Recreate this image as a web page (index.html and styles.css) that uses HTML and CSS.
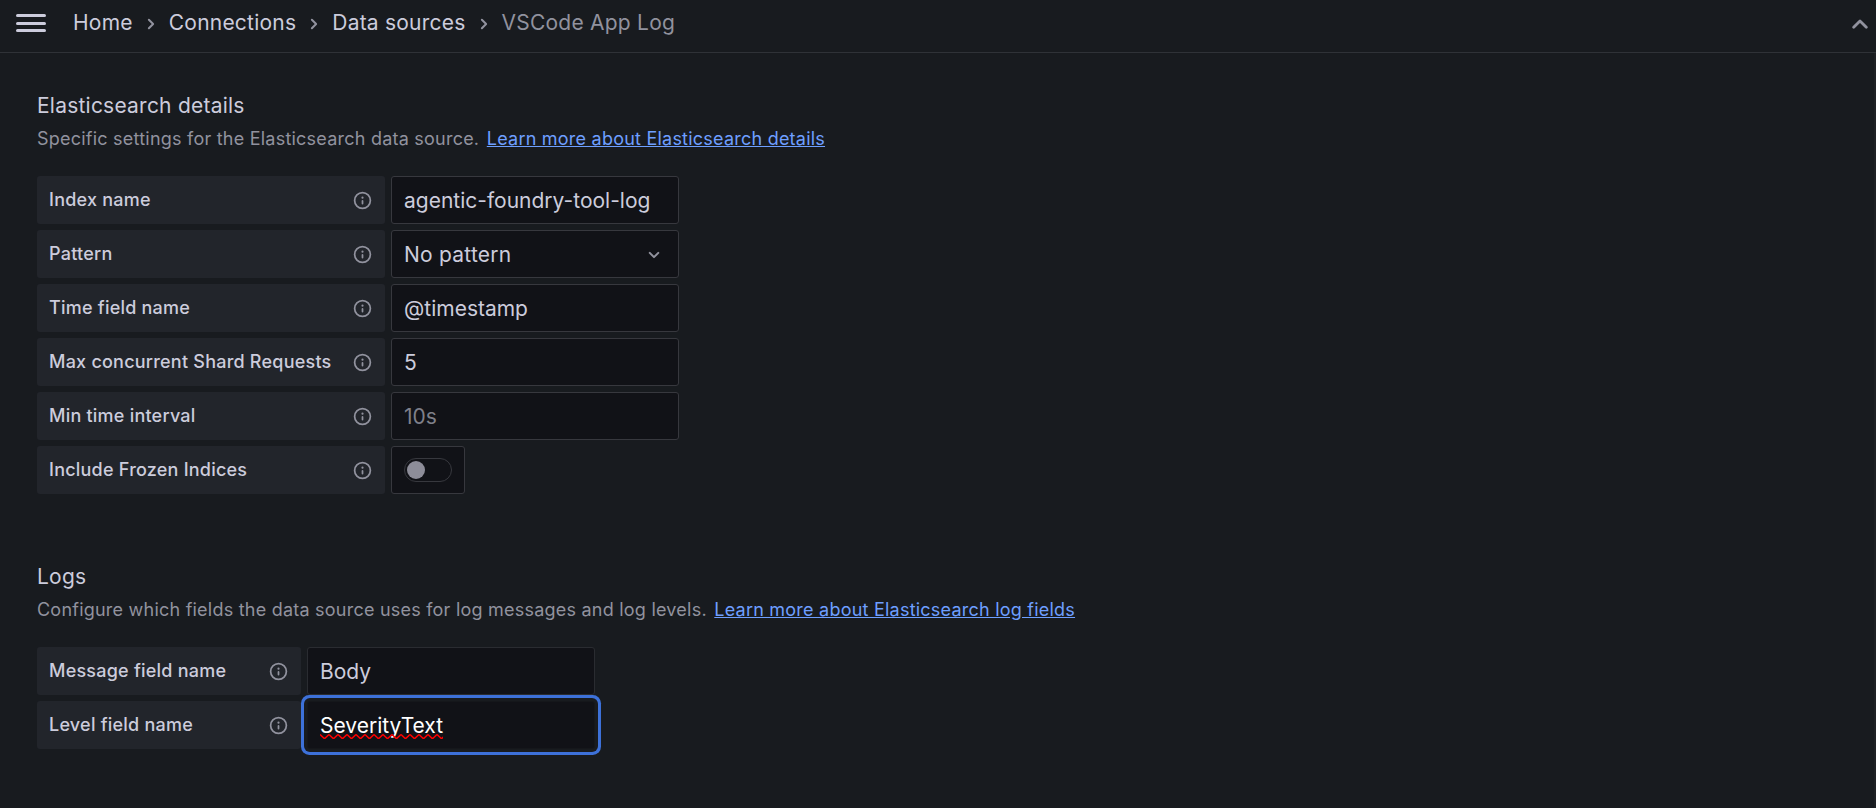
FILE: index.html
```html
<!DOCTYPE html>
<html lang="en">
<head>
<meta charset="utf-8">
<title>VSCode App Log - Data sources</title>
<link rel="stylesheet" href="styles.css">
</head>
<body>
<svg class="defs" aria-hidden="true">
  <symbol id="info" viewBox="0 0 24 24"><path d="M12,2A10,10,0,1,0,22,12,10.01114,10.01114,0,0,0,12,2Zm0,18a8,8,0,1,1,8-8A8.00917,8.00917,0,0,1,12,20Zm0-8.5a1,1,0,0,0-1,1v3a1,1,0,0,0,2,0v-3A1,1,0,0,0,12,11.5Zm0-4a1.25,1.25,0,1,0,1.25,1.25A1.25,1.25,0,0,0,12,7.5Z"/></symbol>
  <symbol id="right" viewBox="0 0 24 24"><path d="M14.83,11.29,10.59,7.05a1,1,0,0,0-1.42,0,1,1,0,0,0,0,1.41L12.71,12,9.17,15.54a1,1,0,0,0,0,1.41,1,1,0,0,0,.71.29,1,1,0,0,0,.71-.29l4.24-4.24A1,1,0,0,0,14.83,11.29Z"/></symbol>
  <symbol id="down" viewBox="0 0 24 24"><path d="M17,9.17a1,1,0,0,0-1.41,0L12,12.71,8.46,9.17a1,1,0,0,0-1.41,0,1,1,0,0,0,0,1.42l4.24,4.24a1,1,0,0,0,1.42,0L17,10.59A1,1,0,0,0,17,9.17Z"/></symbol>
</svg>
<header class="topbar">
  <button class="menu" aria-label="Menu"><span></span><span></span><span></span></button>
  <nav class="crumbs">
    <a>Home</a><svg class="sep"><use href="#right"/></svg>
    <a>Connections</a><svg class="sep"><use href="#right"/></svg>
    <a>Data sources</a><svg class="sep"><use href="#right"/></svg>
    <span class="current">VSCode App Log</span>
  </nav>
  <svg class="collapse" viewBox="0 0 16 10"><path d="M1.7 8.2 8 1.9l6.3 6.3"/></svg>
</header>
<main class="page">
  <section class="section">
    <h3>Elasticsearch details</h3>
    <p class="desc">Specific settings for the Elasticsearch data source.<a class="link">Learn more about Elasticsearch details</a></p>
    <div class="fields wide">
      <div class="row"><label>Index name<svg class="info"><use href="#info"/></svg></label><div class="input">agentic-foundry-tool-log</div></div>
      <div class="row"><label>Pattern<svg class="info"><use href="#info"/></svg></label><div class="input select">No pattern<svg class="caret"><use href="#down"/></svg></div></div>
      <div class="row"><label>Time field name<svg class="info"><use href="#info"/></svg></label><div class="input">@timestamp</div></div>
      <div class="row"><label>Max concurrent Shard Requests<svg class="info"><use href="#info"/></svg></label><div class="input">5</div></div>
      <div class="row"><label>Min time interval<svg class="info"><use href="#info"/></svg></label><div class="input placeholder">10s</div></div>
      <div class="row"><label>Include Frozen Indices<svg class="info"><use href="#info"/></svg></label><div class="switchbox"><div class="switch"><i></i></div></div></div>
    </div>
  </section>
  <section class="section">
    <h3>Logs</h3>
    <p class="desc">Configure which fields the data source uses for log messages and log levels.<a class="link">Learn more about Elasticsearch log fields</a></p>
    <div class="fields narrow">
      <div class="row"><label>Message field name<svg class="info"><use href="#info"/></svg></label><div class="input dim">Body</div></div>
      <div class="row"><label>Level field name<svg class="info"><use href="#info"/></svg></label><div class="input focused"><span class="misspelled">SeverityText<svg class="squiggle" width="123" height="5"><defs><pattern id="wave" width="9" height="5" patternUnits="userSpaceOnUse"><path d="M0 .5 4 4.2h1L9 .5" /></pattern></defs><rect width="123" height="5" fill="url(#wave)" stroke="none"/></svg></span></div></div>
    </div>
  </section>
</main>
</body>
</html>
```
FILE: styles.css
```css
* { box-sizing: border-box; }
html, body { height: 100%; }
body {
  margin: 0;
  overflow: hidden;
  background: #181b1f;
  color: #ccccdc;
  font: 400 21px/33px Inter, sans-serif;
  letter-spacing: 0.01071em;
  display: flex;
  flex-direction: column;
}
.defs { display: none; }
svg { fill: currentColor; flex: none; }
.topbar {
  height: 53px;
  flex: none;
  display: flex;
  align-items: center;
  border-bottom: 1px solid #2f3237;
  padding: 0 8px 6px 16px;
}
.menu {
  width: 30px;
  height: 18px;
  padding: 0;
  border: 0;
  background: none;
  display: flex;
  flex-direction: column;
  justify-content: space-between;
}
.menu span { height: 3px; border-radius: 1.5px; background: #ccccdc; }
.crumbs { display: flex; align-items: center; margin: 0 0 2px 27px; flex: 1; }
.sep { width: 24px; height: 24px; margin: 4px 6px 0; color: #91929e; }
.current { color: #91929e; }
.collapse {
  width: 16px;
  height: 10px;
  margin-top: 2px;
  fill: none;
  stroke: #91929e;
  stroke-width: 2.8;
  stroke-linecap: round;
  stroke-linejoin: round;
}
.page { flex: 1; padding: 36px 37px 0; border-right: 2px solid #1e2024; }
.section { margin-bottom: 66px; }
h3 { margin: 0; font-size: 21px; line-height: 33px; font-weight: 400; }
.desc {
  margin: 3px 0 24px;
  font-size: 18px;
  line-height: 27px;
  letter-spacing: 0.0125em;
  color: #91929e;
}
.link { color: #6e9fff; margin-left: 7.5px; text-decoration: underline; }
.fields { display: flex; flex-direction: column; gap: 6px; }
.row { display: flex; gap: 6px; height: 48px; }
label {
  display: flex;
  justify-content: space-between;
  align-items: center;
  width: 348px;
  padding: 0 12px 1px;
  border-radius: 3px;
  background: #22252b;
  font-size: 18px;
  font-weight: 500;
  line-height: 45px;
}
.narrow label { width: 264px; }
.info { width: 21px; height: 21px; margin-top: 2px; color: #91929e; }
.input {
  display: flex;
  align-items: center;
  width: 288px;
  padding: 1px 12px 0;
  border: 1px solid #37383e;
  border-radius: 3px;
  background: #111217;
  letter-spacing: 0;
}
.select { justify-content: space-between; letter-spacing: 0.01071em; }
.caret { width: 24px; height: 24px; margin-top: 1px; color: #91929e; }
.placeholder { color: #7f808a; }
.dim { border-color: #2a2c31; }
.switchbox {
  display: flex;
  align-items: center;
  justify-content: center;
  width: 74px;
  border: 1px solid #37383e;
  border-radius: 3px;
  background: #111217;
}
.switch { width: 48px; height: 24px; border: 1px solid #37383e; border-radius: 12px; padding: 2px 1.5px; }
.switch i { display: block; width: 18px; height: 18px; border-radius: 50%; background: #8d8d99; }
.focused {
  border-color: #15171b;
  color: #fff;
  box-shadow: 0 0 0 3px #181b1f, 0 0 0 6px #3d71d9;
}
.misspelled { position: relative; }
.squiggle { position: absolute; left: 0; bottom: 3px; fill: none; stroke: #f00; stroke-width: 1.5; }
```
